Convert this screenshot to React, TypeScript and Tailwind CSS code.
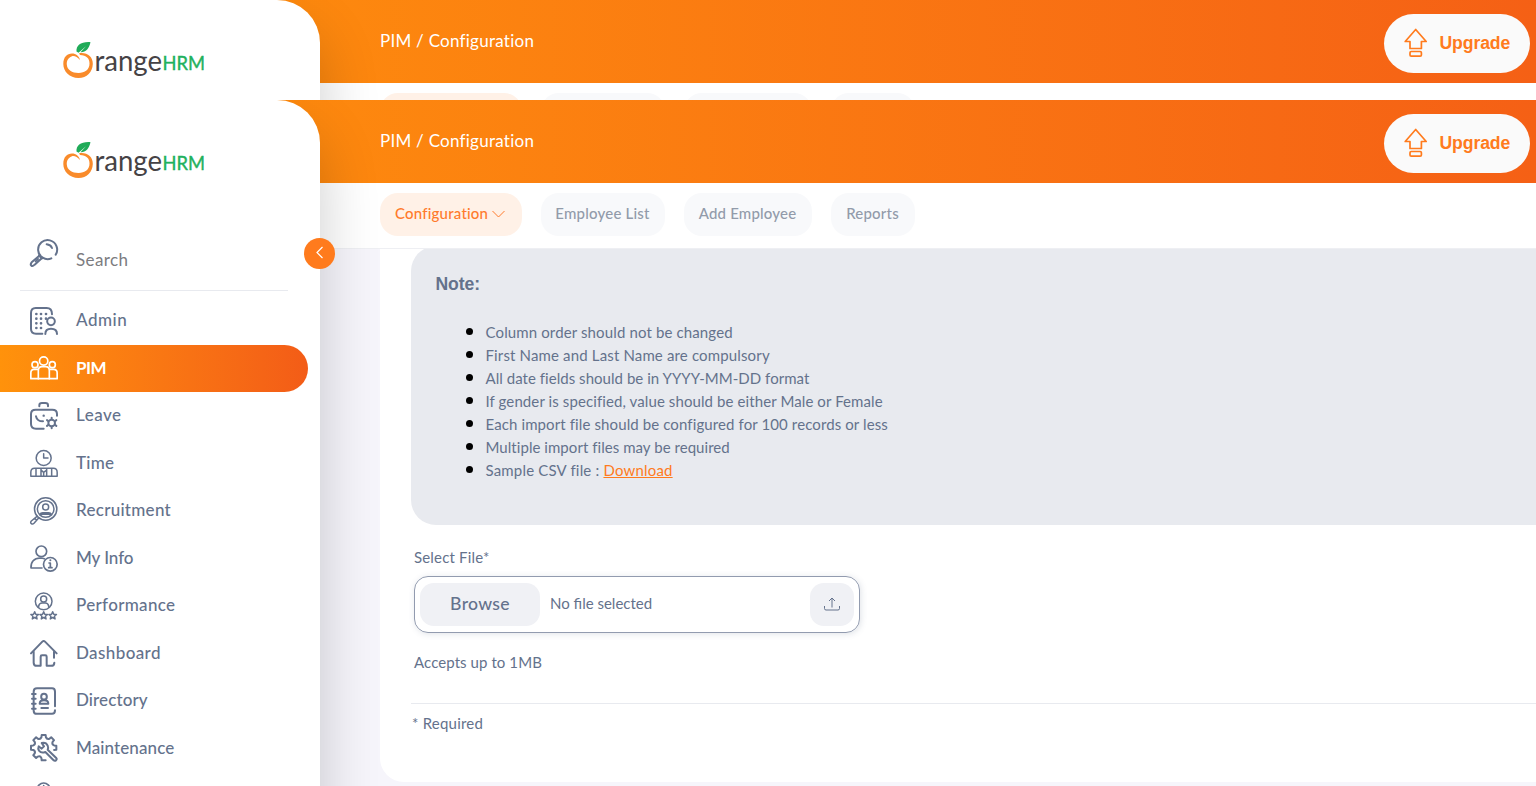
import type { ReactNode } from "react";

function Icon({ children, w = 5 }: { children: ReactNode; w?: number }) {
  return (
    <svg
      viewBox="0 0 84 84"
      className="h-7 w-7 shrink-0 overflow-visible"
      fill="none"
      stroke="currentColor"
      strokeWidth={w}
      strokeLinecap="round"
      strokeLinejoin="round"
    >
      {children}
    </svg>
  );
}

const star = (cx: number, cy: number, outer: number, inner: number, n: number) =>
  Array.from({ length: n * 2 }, (_, i) => {
    const r = i % 2 ? inner : outer;
    const a = (Math.PI * i) / n - Math.PI / 2;
    return `${(cx + r * Math.cos(a)).toFixed(1)},${(cy + r * Math.sin(a)).toFixed(1)}`;
  }).join(" ");

// Open cog outline: seven teeth around (41, 41), leaving the lower-right one out for the wrench handle.
const cogPath = () => {
  const at = (deg: number, r: number) => {
    const a = (deg * Math.PI) / 180;
    return `${(41 + r * Math.cos(a)).toFixed(1)} ${(41 + r * Math.sin(a)).toFixed(1)}`;
  };
  const parts: string[] = [];
  for (let i = 0; i < 7; i++) {
    const c = 90 + i * 45;
    parts.push(`${i ? "L" : "M"}${at(c - 9, 38.5)}L${at(c + 9, 38.5)}L${at(c + 12, 32)}`);
    if (i < 6) parts.push(`Q${at(c + 22.5, 26)} ${at(c + 33, 32)}`);
  }
  return parts.join("");
};

const SearchIcon = () => (
  <Icon w={6}>
    <path d="M77 47A28.5 28.5 0 1 0 64 58" />
    <path d="M50 16Q62 17 66 27" />
    <path d="M28 50L5 70Q0 76 4 80Q8 83 14 77L36 57" />
    <path d="M27 50L36 58M24 60L17 67" />
  </Icon>
);

const AdminIcon = () => (
  <Icon w={6}>
    <path d="M66 22Q66 3 50 3H17Q3 3 3 18V66Q3 80 18 80H37" />
    <path
      d="M19 21h.1M33 21h.1M48 21h.1M19 35h.1M33 35h.1M48 35h.1M19 49h.1M33 49h.1M19 63h.1M33 63h.1"
      strokeWidth="8"
    />
    <circle cx="63" cy="43" r="11.5" />
    <path d="M46 81Q46 65 63 65Q81 65 81 81" />
  </Icon>
);

const PimIcon = () => (
  <Icon w={5}>
    <circle cx="41" cy="21" r="12.5" />
    <circle cx="15" cy="32" r="9" />
    <circle cx="67" cy="32" r="9" />
    <path d="M25 74V50Q25 38 36 38H47Q58 38 58 50V74" />
    <path d="M24 46H12Q2.5 46 2.500 57V74H81.500V57Q81.500 46 71 46H59" />
  </Icon>
);

const LeaveIcon = () => (
  <Icon w={6}>
    <path d="M28 13V10Q28 3 36 3H46Q54 3 54 10V13" />
    <path d="M81 41V36Q81 23 67 23H17Q3 23 3 36V66Q3 80 18 80H41" />
    <path d="M18 43Q21 58 39 58" />
    <path d="M41 41h.1" strokeWidth="7" />
    <circle cx="65" cy="63" r="10" />
    <path d="M65 50V47M65 76V79M54 56.500L51 54.500M76 69.500L79 71.500M54 69.500L51 71.500M76 56.500L79 54.500" />
  </Icon>
);

const TimeIcon = () => (
  <Icon w={4.500}>
    <circle cx="41" cy="27" r="22.5" />
    <path d="M41 14V27H54" />
    <path d="M2.500 81.500V70Q2.500 58 14 58H70Q81.500 58 81.500 70V81.500Z" />
    <path d="M18 59V81M33 59V81M50 59V81M65 59V81M34 64L41 70L49 64M41 70V81" />
  </Icon>
);

const RecruitmentIcon = () => (
  <Icon w={4.500}>
    <circle cx="47" cy="36" r="33.5" />
    <circle cx="47" cy="36" r="25" />
    <circle cx="47" cy="30" r="9" />
    <path d="M30 52Q32 47 38 47H56Q62 47 64 52Z" />
    <path d="M21 58L4 72Q0 77 4 80Q8 83 12 79L26 63M14 64L20 70" />
  </Icon>
);

const MyInfoIcon = () => (
  <Icon>
    <circle cx="34" cy="22" r="16" />
    <path d="M36 72H3Q2 43 31 42Q38 42 43 44" />
    <circle cx="61" cy="61" r="20.5" />
    <path d="M57 57H61V71M56 71H66" />
    <path d="M61 49h.1" strokeWidth="6" />
  </Icon>
);

const PerformanceIcon = () => (
  <Icon w={4.500}>
    <circle cx="41" cy="28" r="25" />
    <circle cx="41" cy="21" r="9" />
    <path d="M26 46V42Q28 33 36 33H46Q54 33 56 42V46" />
    <polygon points={star(14, 71, 12, 5.5, 5)} />
    <polygon points={star(41, 71, 12, 5.5, 5)} />
    <polygon points={star(68, 71, 12, 5.5, 5)} />
  </Icon>
);

const DashboardIcon = () => (
  <Icon w={6}>
    <path d="M3 43L37 8Q41 4 45 8L80 43" />
    <path d="M11 38V71Q11 80.500 21 80.500H32V53Q32 49 36 49H46Q50 49 50 53V80.500H63Q73 80.500 73 71" />
    <path d="M72 38V56" />
  </Icon>
);

const DirectoryIcon = () => (
  <Icon w={6}>
    <path d="M75 58V14Q75 4 66 4H21Q11 4 11 14V71Q11 80.500 21 80.500H66Q75 80.500 75 70" />
    <path d="M6 21H17M6 35H17M6 50H17M6 65H17" />
    <circle cx="42" cy="29" r="8.5" />
    <path d="M29 50Q29 40 42 40Q55 40 55 50ZM34 63H54" />
  </Icon>
);

const MaintenanceIcon = () => (
  <Icon w={6}>
    <path d={cogPath()} />
    <path d="M35 27Q48 24 53 35Q56 42 53 47L78 71Q82 75 78 79Q74 82 70 78L46 54Q34 59 27 50Q23 44 26 37L35 44L42 37Z" />
  </Icon>
);

const ClaimIcon = () => (
  <Icon w={5}>
    <circle cx="41" cy="22" r="19" />
    <path d="M41 11V32M48 15Q36 11 36 17Q36 21 41 22" />
  </Icon>
);

const menu: { label: string; icon: ReactNode; track: string }[] = [
  { label: "Admin", icon: <AdminIcon />, track: "tracking-[0.500px]" },
  { label: "PIM", icon: <PimIcon />, track: "tracking-[-0.500px]" },
  { label: "Leave", icon: <LeaveIcon />, track: "tracking-[0.500px]" },
  { label: "Time", icon: <TimeIcon />, track: "tracking-[0.300px]" },
  { label: "Recruitment", icon: <RecruitmentIcon />, track: "tracking-[0.280px]" },
  { label: "My Info", icon: <MyInfoIcon />, track: "tracking-[-0.050px]" },
  { label: "Performance", icon: <PerformanceIcon />, track: "tracking-[0.330px]" },
  { label: "Dashboard", icon: <DashboardIcon />, track: "tracking-[0.400px]" },
  { label: "Directory", icon: <DirectoryIcon />, track: "tracking-[0.100px]" },
  { label: "Maintenance", icon: <MaintenanceIcon />, track: "tracking-[0.100px]" },
];

const tabs = [
  { label: "Employee List", width: "w-[124px]" },
  { label: "Add Employee", width: "w-[128px]" },
  { label: "Reports", width: "w-[84px]" },
];

const notes = [
  { text: "Column order should not be changed", track: "tracking-[0.130px]" },
  { text: "First Name and Last Name are compulsory", track: "tracking-[0.150px]" },
  { text: "All date fields should be in YYYY-MM-DD format", track: "tracking-[0.040px]" },
  { text: "If gender is specified, value should be either Male or Female", track: "tracking-[0.100px]" },
  { text: "Each import file should be configured for 100 records or less", track: "tracking-[0.110px]" },
  { text: "Multiple import files may be required", track: "tracking-[0.050px]" },
];

function Logo() {
  return (
    <svg viewBox="0 0 144 40" className="ml-[62px] mt-10 h-10 w-36 shrink-0 overflow-visible">
      <path
        d="M1.300 24C1.300 17 5 13.500 10 13.500C14 13.500 17 16 18 20C15 16.500 12 15.500 9.500 16.400C6.500 17.500 4.500 20.500 4.800 24.500C5.200 30 10 33 16.500 33C23 33 27.500 29.500 27.500 23.500C27.500 18 24.500 15.500 18 15L17 13.200C25 12 31 16.500 30.800 24C30.500 32 25 38 16.500 38C7.500 38 1.300 31.500 1.300 24Z"
        fill="#f98b2b"
      />
      <path
        d="M14.500 11.500C14 5.500 19 1.500 28.500 2.200C27 9 23.500 12.500 18.500 12.200L24 6.200L16.500 12.800Z"
        fill="#1fab58"
      />
      <text
        x="32.500"
        y="30.500"
        textLength="67.500"
        lengthAdjust="spacingAndGlyphs"
        fontSize="29"
        fill="#454245"
        className="font-['Lato',sans-serif]"
      >
        range
      </text>
      <text
        x="100.500"
        y="30.300"
        textLength="42.500"
        lengthAdjust="spacingAndGlyphs"
        fontSize="19.500"
        fill="#1fb15e"
        stroke="#1fb15e"
        strokeWidth="0.400"
        className="font-['Lato',sans-serif]"
      >
        HRM
      </text>
    </svg>
  );
}

function Sidebar({ logoOnly = false }: { logoOnly?: boolean }) {
  return (
    <aside className="relative z-20 flex h-[900px] w-80 shrink-0 flex-col rounded-tr-[43px] bg-white text-[#64728c] shadow-[0_30px_60px_rgba(0,0,0,0.2)]">
      <Logo />
      {!logoOnly && (
        <>
          <div className="ml-[30px] mt-[59px] flex h-7 items-start">
            <SearchIcon />
            <span className="ml-[18px] mt-[9px] text-[17px] leading-6 tracking-[0.400px] text-[#7c7c80]">Search</span>
          </div>
          <div className="ml-5 mt-[23px] h-px w-[268px] bg-[#e8eaef]" />
          <nav className="mt-[6px] flex flex-col">
            {menu.map((m) => (
              <div
                key={m.label}
                className={
                  m.label === "PIM"
                    ? "flex h-[47.500px] w-[308px] items-center rounded-r-full bg-linear-to-r from-[#ff920b] to-[#f35c17] pl-[30px] font-bold text-white"
                    : "flex h-[47.500px] w-[308px] items-center pl-[30px] font-medium"
                }
              >
                {m.icon}
                <span className={`mb-px ml-[18px] text-[17px] leading-6 ${m.track}`}>{m.label}</span>
              </div>
            ))}
            <div className="flex h-[47.500px] items-center pl-[30px]">
              <ClaimIcon />
            </div>
          </nav>
          <button className="absolute left-[304px] top-[138px] flex h-[31px] w-[31px] items-center justify-center rounded-full bg-[#ff7b1d]">
            <svg viewBox="0 0 31 31" className="h-[31px] w-[31px]" fill="none" stroke="#fff" strokeWidth="1.200">
              <path d="M18.500 9L13 14.500L18.500 20" />
            </svg>
          </button>
        </>
      )}
    </aside>
  );
}

function TopBar({ blankTabs = false }: { blankTabs?: boolean }) {
  return (
    <>
      <header className="-ml-80 flex h-[83px] shrink-0 items-center justify-between bg-linear-to-r from-[#ff920b] to-[#f56015] pl-[380px] pr-[6px]">
        <h6 className="-mt-px text-[17px] leading-6 tracking-[0.250px] text-white">PIM / Configuration</h6>
        <button className="mt-1 flex h-[59px] w-[146px] items-center rounded-[30px] bg-[#fafafa] pl-5 text-[#ff7b1d]">
          <svg
            viewBox="0 0 24 30"
            className="-mt-[2px] h-[30px] w-6"
            fill="none"
            stroke="currentColor"
            strokeWidth="1.700"
            strokeLinejoin="round"
          >
            <path d="M11.700 1.500L22.200 13.500H17.400V20.500H6V13.500H1.200Z" />
            <rect x="6" y="23.500" width="11.400" height="4.700" rx="1.200" />
          </svg>
          <span className="-mt-[2px] ml-[11.500px] font-['Liberation_Sans',Arial,sans-serif] text-[17.600px] font-bold leading-6 tracking-[-0.100px]">
            Upgrade
          </span>
        </button>
      </header>
      <nav className="flex h-[66px] shrink-0 gap-[19px] border-b border-[#eeeff3] bg-white pl-[60px] pt-[10px] text-[15px] font-medium tracking-[0.200px]">
        <div className="flex h-[43px] w-[142px] items-center rounded-[18px] bg-[#fff1e7] pb-[2px] pl-[15px] text-[#ff7b2d]">
          {!blankTabs && (
            <>
              Configuration
              <svg viewBox="0 0 13 8" className="ml-[4px] h-2 w-[13px]" fill="none" stroke="currentColor">
                <path d="M.5 1L6.500 7L12.500 1" />
              </svg>
            </>
          )}
        </div>
        {tabs.map((t) => (
          <div
            key={t.label}
            className={`flex h-[43px] items-center justify-center rounded-[18px] bg-[#f8f9fb] pb-[2px] pr-px text-[#929baa] ${t.width}`}
          >
            {!blankTabs && t.label}
          </div>
        ))}
      </nav>
    </>
  );
}

function ImportCard() {
  return (
    <section className="ml-[60px] h-[536px] rounded-bl-[24px] bg-white pl-[31px] text-[15px] text-[#64728c]">
      <div className="-mt-[3px] h-[279px] rounded-l-[25px] bg-[#e8eaef] pl-[24.500px] pt-[26px]">
        <p className="font-['Liberation_Sans',Arial,sans-serif] text-[17.600px] font-bold leading-6 tracking-[-0.100px]">
          Note:
        </p>
        <ul className="mt-[23px] list-disc pl-[50px] leading-[23px] marker:text-[20px] marker:text-black">
          {notes.map((n) => (
            <li key={n.text} className={`h-[23px] ${n.track}`}>
              {n.text}
            </li>
          ))}
          <li className="h-[23px] tracking-[0.180px]">
            Sample CSV file : <a className="text-[#ff7b1d] underline">Download</a>
          </li>
        </ul>
      </div>
      <div className="pl-[3px]">
        <p className="mt-[22px] leading-5 tracking-[0.180px]">Select File*</p>
        <div className="mt-[9px] flex h-[57px] w-[446px] items-center rounded-[14px] border border-[#929baf] pl-[5px] pr-[5px] shadow-[1px_1px_6px_rgba(100,114,140,0.2)]">
          <div className="flex h-[43px] w-[120px] items-center justify-center rounded-[14px] bg-[#f0f1f5] pb-px text-[17.600px] font-medium tracking-[0.300px]">
            Browse
          </div>
          <span className="mb-[2px] ml-[10px] flex-1">No file selected</span>
          <div className="flex h-[43px] w-[44px] items-center justify-center rounded-[14px] bg-[#f0f1f5] pb-[2px]">
            <svg viewBox="0 0 16 14" className="h-[14px] w-4" fill="none" stroke="currentColor">
              <path d="M.5 9V11.500Q.5 13 2 13H14Q15.500 13 15.500 11.500V9M8 10.500V1M5 4L8 1L11 4" />
            </svg>
          </div>
        </div>
        <p className="mt-[19px] leading-5 tracking-[0.080px]">Accepts up to 1MB</p>
      </div>
      <div className="mt-[31px] h-px bg-[#e8eaef]" />
      <p className="mt-[9px] pl-px leading-5 tracking-[0.220px]">* Required</p>
    </section>
  );
}

export default function App() {
  return (
    <div className="flex h-[786px] w-[1536px] flex-col overflow-hidden bg-white font-['Lato',sans-serif]">
      <div className="flex h-[100px] shrink-0 overflow-hidden">
        <Sidebar logoOnly />
        <div className="flex min-w-0 flex-1 flex-col">
          <TopBar blankTabs />
        </div>
      </div>
      <div className="flex h-[686px] shrink-0 overflow-hidden">
        <Sidebar />
        <div className="flex min-w-0 flex-1 flex-col bg-[#f6f5fb]">
          <TopBar />
          <main className="flex-1 overflow-hidden">
            <ImportCard />
          </main>
        </div>
      </div>
    </div>
  );
}
